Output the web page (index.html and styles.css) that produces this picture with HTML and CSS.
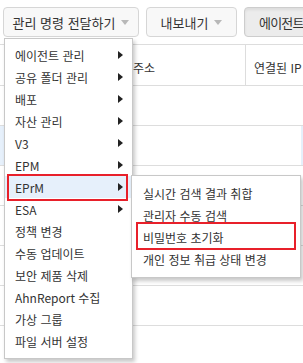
FILE: index.html
```html
<!DOCTYPE html>
<html lang="ko">
<head>
  <meta charset="UTF-8" />
  <title>관리 명령 전달하기</title>
  <link rel="stylesheet" href="styles.css">
</head>
<body>
  <!-- Toolbar -->
  <div class="toolbar">
    <div class="btn btn-cmd">관리 명령 전달하기 <span class="caret"></span></div>
    <div class="btn btn-export">내보내기 <span class="caret"></span></div>
    <div class="btn btn-agent">에이전트</div>
  </div>

  <!-- Agent table (behind the menu) -->
  <div class="table">
    <div class="thead">
      <div class="th th-addr"><span class="sort-mark"></span>주소</div>
      <div class="th th-ip">연결된 IP</div>
    </div>
    <div class="row"><span class="dash"></span></div>
    <div class="row row-sel"><div class="row-inner"><span class="dash"></span></div></div>
    <div class="row"><span class="dash"></span></div>
    <div class="row"><span class="dash"></span></div>
    <div class="row"><span class="dash"></span></div>
    <div class="row"><span class="dash"></span></div>
    <div class="row"><span class="dash"></span></div>
  </div>

  <!-- Dropdown menu -->
  <ul class="menu">
    <li class="item">에이전트 관리 <span class="arrow"></span></li>
    <li class="item">공유 폴더 관리 <span class="arrow"></span></li>
    <li class="item">배포 <span class="arrow"></span></li>
    <li class="item">자산 관리 <span class="arrow"></span></li>
    <li class="item">V3 <span class="arrow"></span></li>
    <li class="item">EPM <span class="arrow"></span></li>
    <li class="item item-on">EPrM <span class="arrow"></span></li>
    <li class="item">ESA <span class="arrow"></span></li>
    <li class="item">정책 변경</li>
    <li class="item">수동 업데이트</li>
    <li class="item">보안 제품 삭제</li>
    <li class="item">AhnReport 수집</li>
    <li class="item">가상 그룹</li>
    <li class="item">파일 서버 설정</li>
  </ul>

  <ul class="menu submenu">
    <li class="item">실시간 검색 결과 취합</li>
    <li class="item">관리자 수동 검색</li>
    <li class="item">비밀번호 초기화</li>
    <li class="item">개인 정보 취급 상태 변경</li>
  </ul>

  <!-- Red annotation boxes -->
  <div class="mark mark-eprm"></div>
  <div class="mark mark-pw"></div>
</body>
</html>
```

FILE: styles.css
```css
/* Base */
* {
  box-sizing: border-box;
}
body {
  margin: 0;
  width: 303px;
  height: 363px;
  overflow: hidden;
  position: relative;
  font-family: "Noto Sans CJK KR", "Noto Sans", sans-serif;
  font-size: 12px;
  color: #333;
  background: #fff;
}

/* Toolbar buttons */
.toolbar {
  display: flex;
  gap: 7px;
  height: 44px;
  padding: 7px 0 0 3px;
  white-space: nowrap;
}
.btn {
  flex: none;
  height: 30px;
  display: flex;
  align-items: center;
  justify-content: center;
  gap: 6px;
  border: 1px solid #d6d6d6;
  border-radius: 4px;
  background: #f8f8f8;
  font-size: 13px;
}
.btn-cmd {
  width: 136px;
}
.btn-export {
  width: 91px;
}
.btn-agent {
  width: 110px;
  justify-content: flex-start;
  padding-left: 14px;
  letter-spacing: -0.8px;
  background: #ececec;
  border-color: #cdcdcd;
  box-shadow: inset 0 2px 3px rgba(0,0,0,0.07);
}
.caret {
  width: 0;
  height: 0;
  border-left: 4px solid transparent;
  border-right: 4px solid transparent;
  border-top: 5px solid #b8b8b8;
}

/* Table */
.table {
  border-top: 1px solid #ddd;
}
.thead {
  display: grid;
  grid-template-columns: 245px 1fr;
  height: 41px;
  border-bottom: 1px solid #ddd;
}
.th {
  display: flex;
  align-items: center;
  padding-top: 4px;
  white-space: nowrap;
}
.th-addr {
  padding-left: 130px;
}
.th-ip {
  border-left: 1px solid #ddd;
  padding-left: 8px;
}
.sort-mark {
  width: 1px;
  height: 3px;
  margin: -8px 2px 0 0;
  background: #5b8fd6;
}
.row {
  height: 40px;
  border-bottom: 1px solid #ddd;
  display: flex;
  align-items: center;
  padding-left: 131px;
}
.row-sel {
  padding: 0 2px 0 0;
  background: #e6f0fb;
}
.row-inner {
  height: 100%;
  margin-left: 133px;
  flex: 1;
  background: #fff;
  display: flex;
  align-items: center;
  padding-left: 0;
}
.row-sel .dash {
  margin-left: -2px;
}
.dash {
  width: 2px;
  height: 9px;
  border-top: 1px solid #333;
  border-bottom: 1px solid #333;
}

/* Dropdown menus */
.menu {
  position: absolute;
  left: 4px;
  top: 38px;
  width: 129px;
  margin: 0;
  padding: 5px 0 6px;
  list-style: none;
  background: #fff;
  border: 1px solid #c8c8c8;
  box-shadow: 2px 3px 4px rgba(0,0,0,0.22);
  white-space: nowrap;
}
.item {
  height: 22px;
  display: flex;
  align-items: center;
  justify-content: space-between;
  padding: 0 9px 0 10px;
}
.item-on {
  background: #e6f0fb;
}
.arrow {
  width: 0;
  height: 0;
  border-top: 4px solid transparent;
  border-bottom: 4px solid transparent;
  border-left: 5px solid #222;
}
.submenu {
  left: 131px;
  top: 175px;
  width: 170px;
  padding: 6px 0 7px;
}
.submenu .item {
  padding-left: 11px;
}

/* Annotation boxes */
.mark {
  position: absolute;
  border: 2px solid #e8202a;
}
.mark-eprm {
  left: 7px;
  top: 174px;
  width: 121px;
  height: 27px;
}
.mark-pw {
  left: 136px;
  top: 222px;
  width: 160px;
  height: 28px;
}
```
